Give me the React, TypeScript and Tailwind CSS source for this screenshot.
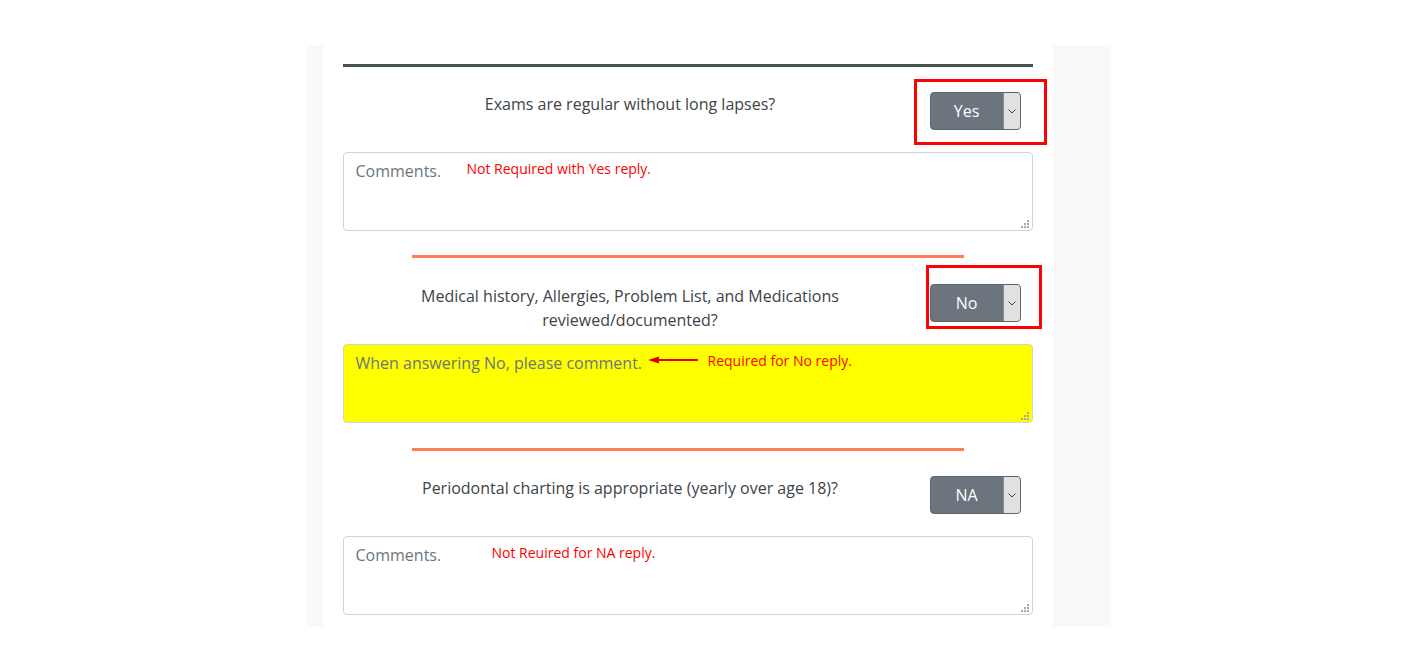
import React from "react";

function Select({ value }: { value: string }) {
  return (
    <div className="flex h-[38px] w-[91px] overflow-hidden rounded-[4px] border border-[#5f666d] bg-[#6c757d]">
      <div className="flex flex-1 items-center justify-center text-[16px] text-white">{value}</div>
      <div className="flex w-[17px] items-center justify-center border-l border-[#8a9096] bg-[#e1e1e1]">
        <svg width="8" height="5" viewBox="0 0 8 5" fill="none">
          <path d="M0.5 0.5 L4 4 L7.5 0.5" stroke="#444" strokeWidth="1" />
        </svg>
      </div>
    </div>
  );
}

function Grip() {
  return (
    <svg className="pointer-events-none absolute bottom-[3px] right-[4px]" width="8" height="8" viewBox="0 0 8 8">
      <rect x="6" y="0" width="2" height="2" fill="#a8a8a8" />
      <rect x="3" y="3" width="2" height="2" fill="#a8a8a8" />
      <rect x="6" y="3" width="2" height="2" fill="#a8a8a8" />
      <rect x="0" y="6" width="2" height="2" fill="#a8a8a8" />
      <rect x="3" y="6" width="2" height="2" fill="#a8a8a8" />
      <rect x="6" y="6" width="2" height="2" fill="#a8a8a8" />
    </svg>
  );
}

function Question({
  text,
  value,
  placeholder,
  yellow,
  note,
  noteLeft,
  arrow,
  box,
}: {
  text: React.ReactNode;
  value: string;
  placeholder: string;
  yellow?: boolean;
  note: string;
  noteLeft: number;
  arrow?: boolean;
  box?: { l: number; t: number; w: number; h: number };
}) {
  return (
    <div>
      <div className="relative flex h-[60px] items-start">
        <div className="w-[575px] text-center text-[16px] leading-[24px] text-[#3d4349]">{text}</div>
        <div className="flex flex-1 justify-center">
          <Select value={value} />
        </div>
        {box && (
          <div
            className="pointer-events-none absolute border-[3px] border-[#ff0000]"
            style={{ left: box.l, top: box.t, width: box.w, height: box.h }}
          />
        )}
      </div>
      <div className="relative">
        <textarea
          placeholder={placeholder}
          className={`block h-[79px] w-full resize-none rounded-[4px] border border-[#ced4da] px-[12px] py-[6px] text-[16px] leading-[24px] placeholder:text-[#6c757d] ${
            yellow ? "bg-[#ffff00]" : "bg-white"
          }`}
        />
        <Grip />
        <div
          className="pointer-events-none absolute top-[7px] whitespace-nowrap text-[14px] leading-[19px] text-[#ff0000]"
          style={{ left: noteLeft }}
        >
          {note}
        </div>
        {arrow && (
          <svg className="pointer-events-none absolute left-[305px] top-[11px]" width="50" height="10" viewBox="0 0 50 10">
            <line x1="8" y1="5" x2="50" y2="5" stroke="#e00000" strokeWidth="2" />
            <polygon points="0,5 11,1.5 11,8.5" fill="#e00000" />
          </svg>
        )}
      </div>
    </div>
  );
}

export default function App() {
  return (
    <div className="min-h-[672px] bg-white pt-[45px]" style={{ fontFamily: '"Open Sans", "Noto Sans", sans-serif' }}>
      <div className="mx-auto flex h-[582px] w-[805px] bg-[#f9f9f9] pl-[17px] pr-[58px]">
        <div className="flex-1 bg-white px-[20px] pt-[19px]">
          <div className="h-[3px] bg-[#46524c]" />
          <div className="mt-[25px]">
            <Question
              text="Exams are regular without long lapses?"
              value="Yes"
              placeholder="Comments."
              note="Not Required with Yes reply."
              noteLeft={124}
              box={{ l: 571, t: -13, w: 133, h: 66 }}
            />
          </div>
          <div className="mx-auto mt-[24px] h-[3px] w-[552px] bg-[#ff7f56]" />
          <div className="mt-[26px]">
            <Question
              text={
                <>
                  Medical history, Allergies, Problem List, and Medications
                  <br />
                  reviewed/documented?
                </>
              }
              value="No"
              placeholder="When answering No, please comment."
              yellow
              note="Required for No reply."
              noteLeft={365}
              arrow
              box={{ l: 583, t: -19, w: 116, h: 64 }}
            />
          </div>
          <div className="mx-auto mt-[25px] h-[3px] w-[552px] bg-[#ff7f56]" />
          <div className="mt-[25px]">
            <Question
              text="Periodontal charting is appropriate (yearly over age 18)?"
              value="NA"
              placeholder="Comments."
              note="Not Reuired for NA reply."
              noteLeft={149}
            />
          </div>
        </div>
      </div>
    </div>
  );
}
